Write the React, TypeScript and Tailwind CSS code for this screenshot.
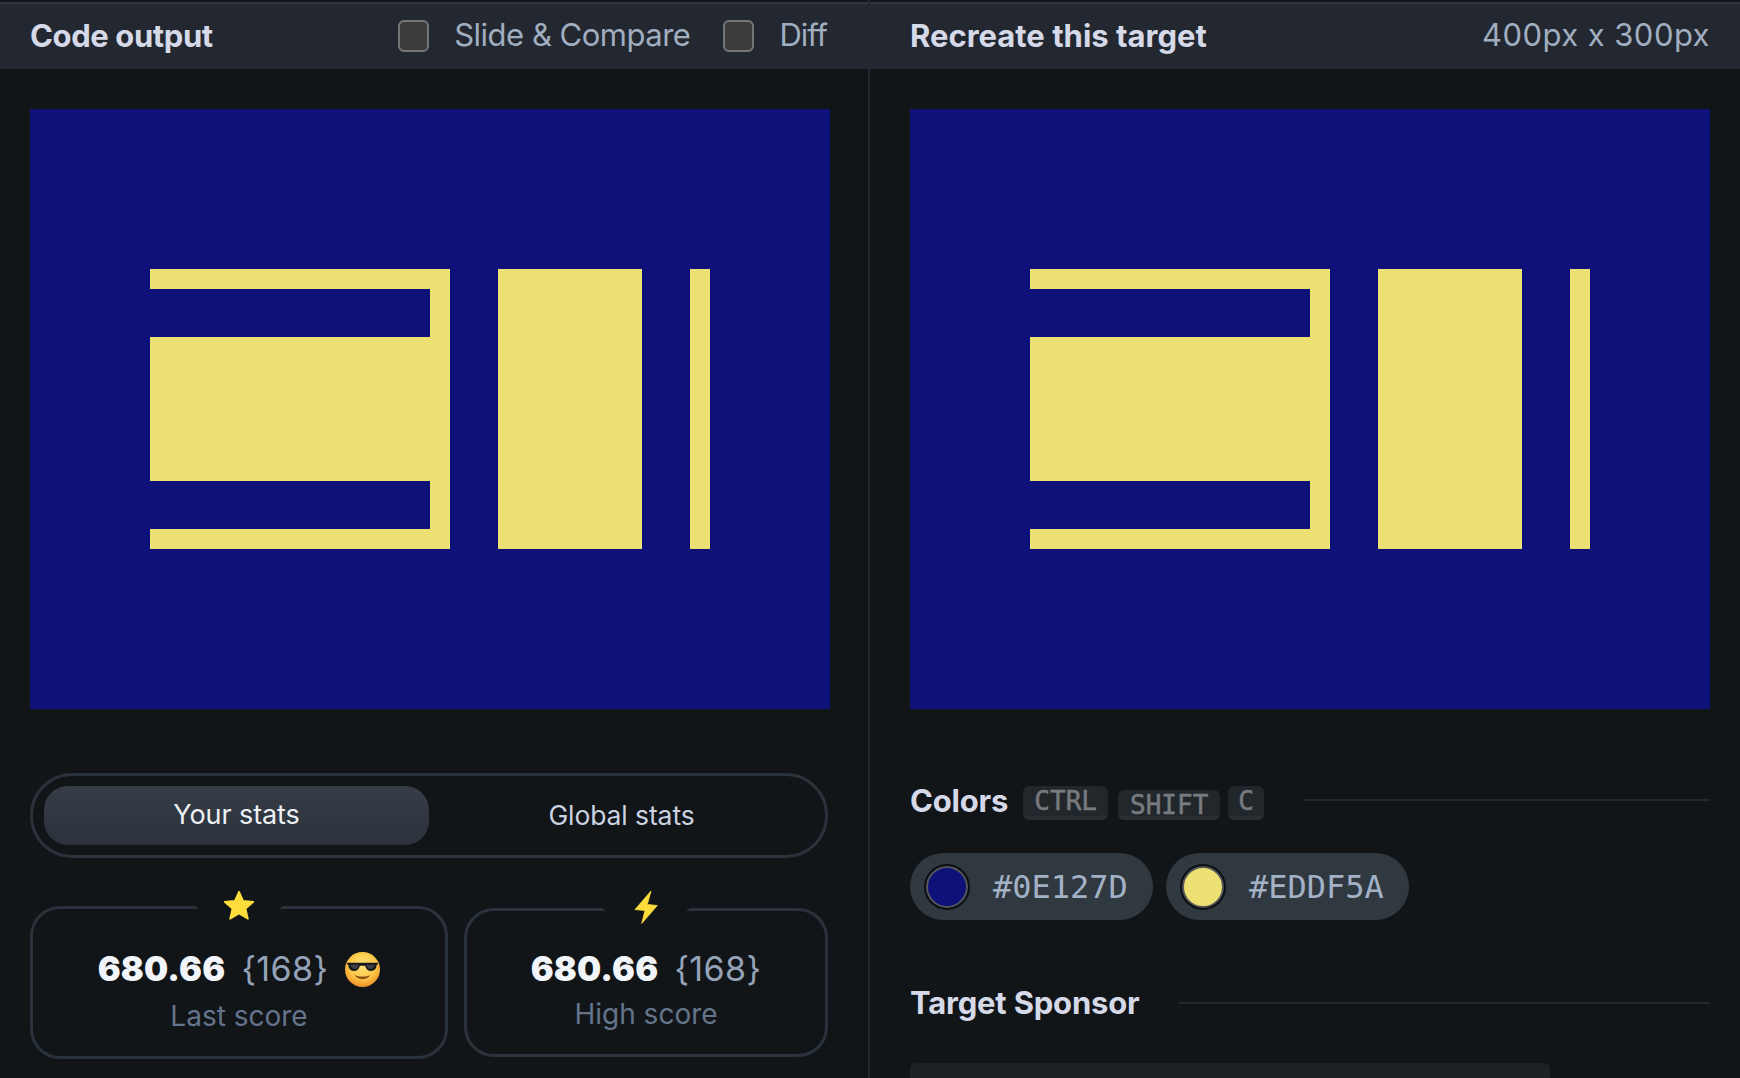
const sans = "font-['Inter',sans-serif]";

function TargetArt() {
  return (
    <div className="flex h-[600px] w-[800px] shrink-0 bg-[#0e1278] pl-[120px] pt-[160px]">
      <div className="flex h-[280px] w-[300px] flex-col justify-between bg-[#ede173] py-5">
        <div className="h-12 w-[280px] bg-[#0e1278]" />
        <div className="h-12 w-[280px] bg-[#0e1278]" />
      </div>
      <div className="ml-12 h-[280px] w-36 bg-[#ede173]" />
      <div className="ml-12 h-[280px] w-5 bg-[#ede173]" />
    </div>
  );
}

function Checkbox() {
  return <span className="block h-8 w-[31px] rounded-[6px] border-2 border-[#767676] bg-[#3b3b3b]" />;
}

function Sunglasses() {
  return (
    <svg width="35" height="35" viewBox="0 0 34 34" className="shrink-0">
      <defs>
        <radialGradient id="face" cx="0.5" cy="0.38" r="0.62">
          <stop offset="0" stopColor="#ffe57a" />
          <stop offset="0.65" stopColor="#fcc545" />
          <stop offset="1" stopColor="#ea8f2a" />
        </radialGradient>
      </defs>
      <circle cx="17" cy="17" r="17" fill="url(#face)" />
      <path d="M2 10.500h30v1.500l-1.200.5c-.4 4-2.300 6-5.300 6-3.200 0-5-2-6-5.200h-5c-1 3.200-2.800 5.200-6 5.200-3 0-4.900-2-5.300-6L2 12z" fill="#17181c" />
      <path d="M5 12.500h8.500c-.5 2.500-2 4-4 4s-3.800-1.500-4.500-4zM20.500 12.500H29c-.7 2.500-2.500 4-4.500 4s-3.500-1.500-4-4z" fill="#3f4146" />
      <path d="M9 22c2 3.200 5 4.500 8 4.500s6-1.300 8-4.500c-2.500 1.400-5 1.900-8 1.900S11.500 23.400 9 22z" fill="#8a5216" />
    </svg>
  );
}

function Star() {
  return (
    <svg width="32" height="31" viewBox="0 0 30 29">
      <path d="M15 1.500l3.900 8.700 9.600.9-7.300 6.300 2.200 9.600-8.400-5-8.400 5 2.200-9.600-7.300-6.300 9.600-.9z" fill="#fddc3c" stroke="#fddc3c" strokeWidth="1.500" strokeLinejoin="round" />
    </svg>
  );
}

function Bolt() {
  return (
    <svg width="24" height="34" viewBox="-1 -0.500 24 34">
      <path d="M16 .5L0 19l10 1-3.300 13L22.300 15l-10-1z" fill="#fddc3c" stroke="#fddc3c" strokeWidth="0.800" strokeLinejoin="round" />
    </svg>
  );
}

function StatCard(props: { icon: React.ReactNode; label: string; emoji?: boolean; className: string; labelClass: string }) {
  return (
    <div className={`relative flex flex-col items-center rounded-[30px] border-[3px] border-[#2a323b] ${props.className}`}>
      <div className="absolute -top-[3px] left-1/2 h-[3px] w-[88px] -translate-x-1/2 bg-[#111518] [clip-path:polygon(0_0,100%_0,calc(100%-4px)_100%,4px_100%)]" />
      <div className="absolute -top-5 left-1/2 flex h-8 -translate-x-1/2 items-center justify-center">
        {props.icon}
      </div>
      <div className="flex items-center">
        <span className={`${sans} text-[34px] font-black leading-10 tracking-[0.2px] text-[#f1f5f9]`}>680.66</span>
        <span className={`${sans} ml-4 text-[34px] font-normal leading-10 tracking-[0.4px] text-[#94a3b8]`}>{"{168}"}</span>
        {props.emoji && <span className="ml-[17px]"><Sunglasses /></span>}
      </div>
      <div className={`${sans} text-[28px] leading-8 text-[#64748b] ${props.labelClass}`}>{props.label}</div>
    </div>
  );
}

function Kbd(props: { children: string; className: string }) {
  return (
    <span className={`flex items-start justify-center rounded-md border-b-4 border-[#2a2e33] bg-[#22272b] font-['DejaVu_Sans_Mono',monospace] text-[26px] leading-[30px] text-[#777b80] [-webkit-text-stroke:0.5px_#777b80] ${props.className}`}>
      {props.children}
    </span>
  );
}

function ColorPill(props: { swatch: string; label: string }) {
  return (
    <div className="flex h-[67px] w-[243px] items-center rounded-[34px] bg-[#303840] pl-4">
      <span className={`h-[42px] w-[42px] rounded-full border-2 border-[#55575a] outline-2 outline-[#0d0f12] ${props.swatch}`} />
      <span className="ml-[25px] font-['DejaVu_Sans_Mono',monospace] text-[32px] leading-none text-[#a3b1c6]">{props.label}</span>
    </div>
  );
}

function Heading(props: { children: string; className?: string }) {
  return <span className={`${sans} text-[31px] font-bold leading-9 text-[#d5d9e8] ${props.className ?? ""}`}>{props.children}</span>;
}

export default function App() {
  return (
    <div className={`${sans} flex h-[1078px] w-[1740px] overflow-hidden bg-[#111518]`}>
      <div className="flex w-[870px] shrink-0 flex-col border-r-2 border-[#23282f]">
        <div className="mt-[2px] flex h-[67px] shrink-0 items-center border-t-2 border-[#2f3640] bg-[#232830] pb-[2px] pl-[30px] pr-[41px]">
          <Heading className="tracking-[-0.4px]">Code output</Heading>
          <div className="ml-auto flex items-center">
            <Checkbox />
            <span className="ml-[25px] text-[31px] tracking-[-0.5px] text-[#a0aec0]">Slide &amp; Compare</span>
            <span className="ml-[33px]"><Checkbox /></span>
            <span className="ml-[25px] text-[31px] tracking-[-1px] text-[#a0aec0]">Diff</span>
          </div>
        </div>
        <div className="shrink-0 pl-[30px] pt-10">
          <TargetArt />
        </div>
        <div className="ml-[30px] mt-16 flex h-[85px] w-[798px] shrink-0 items-center rounded-[42px] border-[3px] border-[#2a323b] pl-[11px]">
          <div className="flex h-[59px] w-[385px] items-center justify-center rounded-[24px] bg-gradient-to-b from-[#363d47] to-[#2b323b] text-[27px] tracking-[-0.1px] text-[#edf0f5]">
            Your stats
          </div>
          <div className="flex w-[385px] items-center justify-center text-[26.5px] tracking-[-0.1px] text-[#cbd2e0]">Global stats</div>
        </div>
        <div className="ml-[30px] mt-12 flex shrink-0 items-center gap-4">
          <StatCard icon={<Star />} label="Last score" emoji className="h-[153px] w-[418px] pt-10" labelClass="mt-[11px]" />
          <StatCard icon={<Bolt />} label="High score" className="h-[149px] w-[364px] pt-[38px]" labelClass="mt-[9px]" />
        </div>
      </div>
      <div className="flex flex-1 flex-col">
        <div className="mt-[2px] flex h-[67px] shrink-0 items-center justify-between border-t-2 border-[#2f3640] bg-[#232830] pb-[2px] pl-10 pr-[30px]">
          <Heading>Recreate this target</Heading>
          <span className="text-[31px] tracking-[0.45px] text-[#a0aec0]">400px x 300px</span>
        </div>
        <div className="shrink-0 pl-10 pt-10">
          <TargetArt />
        </div>
        <div className="ml-10 mr-[30px] mt-[77px] flex h-[34px] shrink-0 items-start">
          <Heading className="-mt-[3px] tracking-[-0.2px]">Colors</Heading>
          <Kbd className="ml-[15px] h-[34px] w-[85px]">CTRL</Kbd>
          <Kbd className="ml-[10px] mt-[4px] h-[30px] w-[102px]">SHIFT</Kbd>
          <Kbd className="ml-2 h-[34px] w-9">C</Kbd>
          <div className="ml-10 mt-[13px] h-[2px] flex-1 bg-[#23282f]" />
        </div>
        <div className="ml-10 mt-[33px] flex shrink-0 gap-[13px]">
          <ColorPill swatch="bg-[#0e1278]" label="#0E127D" />
          <ColorPill swatch="bg-[#ede173]" label="#EDDF5A" />
        </div>
        <div className="ml-10 mr-[30px] mt-[65px] flex shrink-0 items-center">
          <Heading className="tracking-[-0.2px]">Target Sponsor</Heading>
          <div className="ml-10 h-[2px] flex-1 bg-[#23282f]" />
        </div>
        <div className="ml-10 mt-[42px] h-[60px] w-[640px] shrink-0 rounded-md bg-[#1e2226]" />
      </div>
    </div>
  );
}
